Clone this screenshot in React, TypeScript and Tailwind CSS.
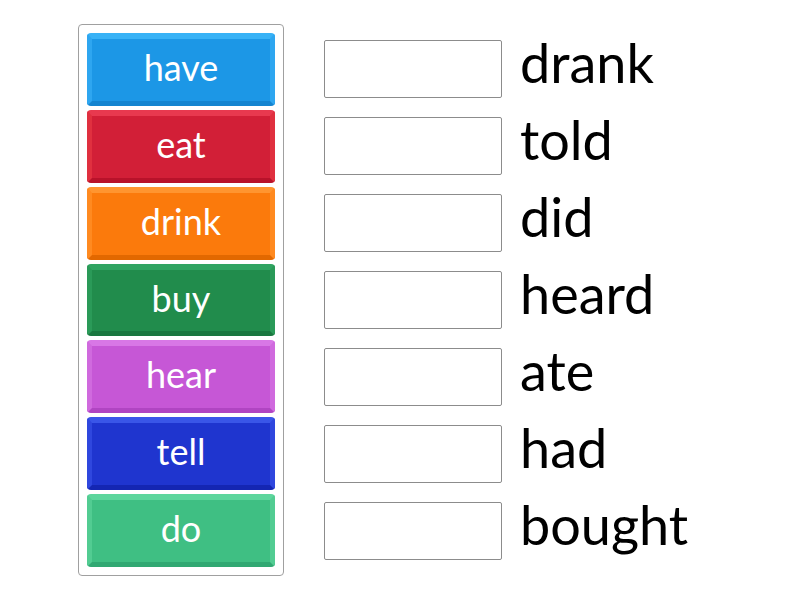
const tiles = [
  { label: "have", className: "bg-[#1c97e6] border-t-[#38b2f6] border-x-[#2ea6f0] border-b-[#1484d0]" },
  { label: "eat", className: "bg-[#d21f37] border-t-[#e8394f] border-x-[#e0303f] border-b-[#b8122a]" },
  { label: "drink", className: "bg-[#fb7a0c] border-t-[#ff9530] border-x-[#ff8a20] border-b-[#e26800]" },
  { label: "buy", className: "bg-[#218c4c] border-t-[#30a461] border-x-[#2a9a58] border-b-[#19773f]" },
  { label: "hear", className: "bg-[#c657d6] border-t-[#d877e6] border-x-[#d06ade] border-b-[#b045c2]" },
  { label: "tell", className: "bg-[#1f35cf] border-t-[#3a56e8] border-x-[#2f47de] border-b-[#1426b2]" },
  { label: "do", className: "bg-[#3fbf83] border-t-[#5dd69d] border-x-[#52cc92] border-b-[#31a872]" },
];

const answers = ["drank", "told", "did", "heard", "ate", "had", "bought"];

export default function App() {
  return (
    <div className="flex h-[600px] w-[800px] bg-white pl-[78px] pt-[24px] font-['Lato',sans-serif]">
      <div className="flex h-[552px] w-[206px] flex-col gap-[4px] rounded-[4px] border border-[#a0a0a0] p-[8px]">
        {tiles.map((tile) => (
          <div
            key={tile.label}
            className={`flex h-[73px] items-center justify-center rounded-[4px] border-t-[6px] border-x-[5px] border-b-[5px] pb-[6px] text-[36px] leading-none text-white ${tile.className}`}
          >
            {tile.label}
          </div>
        ))}
      </div>

      <div className="ml-[40px] flex flex-col gap-[4px] pt-[8px]">
        {answers.map((word) => (
          <div key={word} className="flex h-[73px] items-center">
            <div className="h-[58px] w-[178px] rounded-[2px] border border-[#8c8c8c] bg-white" />
            <span className="ml-[18px] pb-[12px] text-[54px] leading-none text-black">{word}</span>
          </div>
        ))}
      </div>
    </div>
  );
}
